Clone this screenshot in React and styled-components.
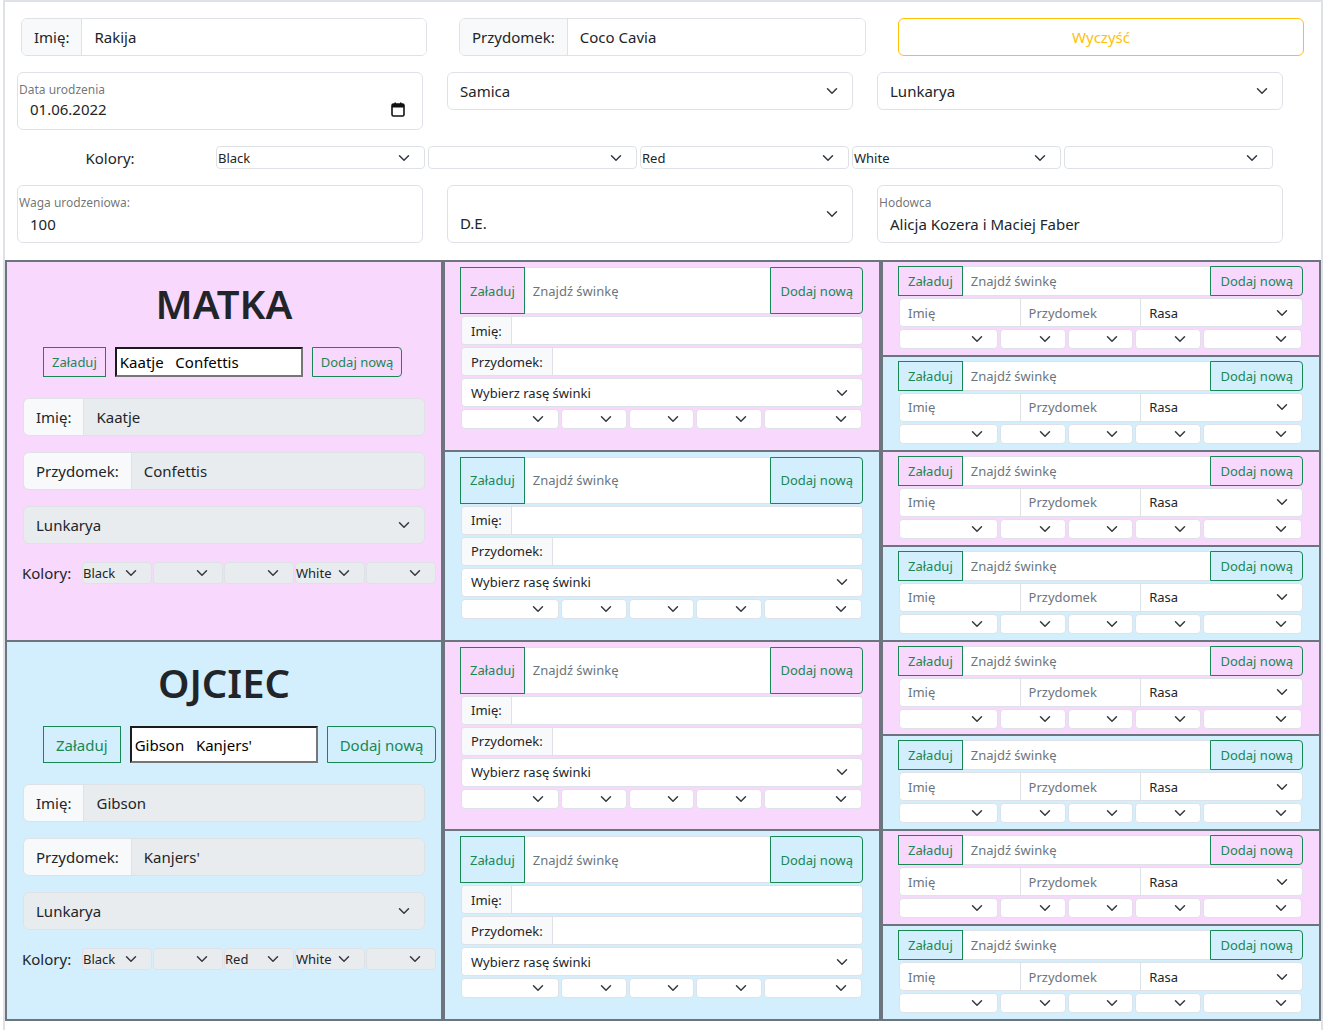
import React from 'react';
import styled, { createGlobalStyle } from 'styled-components';

const FONT = `"Noto Sans", "Segoe UI", "Liberation Sans", sans-serif`;
const PINK = '#f8d8fd';
const BLUE = '#d3effd';
const GREEN = '#198754';
const LINE = '#dee2e6';
const TEXT = '#212529';
const MUTED = '#6c757d';

// Noto Sans runs wider than the original UI font, so sizes are scaled down a touch
const FS = 15;
const FS_SM = 13;

const GlobalStyle = createGlobalStyle`
  * { box-sizing: border-box; }
  body {
    margin: 0;
    font-family: ${FONT};
    color: ${TEXT};
    background: #fff;
  }
`;

const Page = styled.div`
  width: 1320px;
  margin-left: 3px;
  border: 2px solid ${LINE};
  border-bottom: none;
  padding-bottom: 20px;
`;

/* ---------- shared bits ---------- */

const ChevronSvg = styled.svg`
  flex-shrink: 0;
  margin-right: 12px;
`;

const Chevron = () => (
  <ChevronSvg viewBox="0 0 16 16" width="16" height="12">
    <path
      fill="none"
      stroke="#343a40"
      strokeLinecap="round"
      strokeLinejoin="round"
      strokeWidth="2"
      d="m2 5 6 6 6-6"
    />
  </ChevronSvg>
);

const SelectBox = styled.div`
  display: flex;
  align-items: center;
  flex-shrink: 0;
  height: ${p => p.$h}px;
  width: ${p => (p.$w ? `${p.$w}px` : 'auto')};
  padding-left: ${p => p.$pl ?? 12}px;
  border: 1px solid ${LINE};
  border-radius: ${p => p.$r ?? 6}px;
  background: ${p => (p.$disabled ? '#e9ecef' : '#fff')};
  font-size: ${p => p.$fs ?? FS}px;
  color: ${TEXT};
  min-width: 0;
`;

const SelectText = styled.span`
  flex: 1;
  white-space: nowrap;
  overflow: hidden;
  padding-top: ${p => p.$drop ?? 0}px;
`;

const Select = ({ children, ...rest }) => (
  <SelectBox {...rest}>
    <SelectText $drop={rest.$drop}>{children}</SelectText>
    <Chevron />
  </SelectBox>
);

const Group = styled.div`
  display: flex;
  align-items: stretch;
  height: ${p => p.$h}px;
  width: ${p => (p.$w ? `${p.$w}px` : 'auto')};
  border: 1px solid ${LINE};
  border-radius: ${p => p.$r ?? 6}px;
  overflow: hidden;
  font-size: ${p => p.$fs ?? FS}px;
  margin: ${p => p.$m ?? '0'};
`;

const Addon = styled.span`
  display: flex;
  align-items: center;
  padding: 0 ${p => p.$px ?? 12}px;
  background: #f8f9fa;
  border-right: 1px solid ${LINE};
  white-space: nowrap;
`;

const Field = styled.span`
  flex: 1;
  display: flex;
  align-items: center;
  padding: 0 ${p => p.$px ?? 12}px;
  background: ${p => (p.$disabled ? '#e9ecef' : '#fff')};
  color: ${TEXT};
  white-space: nowrap;
`;

/* ---------- top form ---------- */

const TopForm = styled.div`
  display: flex;
  flex-direction: column;
  gap: 16px;
  padding: 16px 0 17px;
`;

const TopRow = styled.div`
  display: flex;
  align-items: ${p => p.$align ?? 'center'};
  padding-left: ${p => p.$pad}px;
  gap: ${p => p.$gap}px;
`;

const ClearButton = styled.button`
  width: 406px;
  height: 38px;
  border: 1px solid #ffc107;
  border-radius: 6px;
  background: #fff;
  color: #ffc107;
  font-family: ${FONT};
  font-size: ${FS}px;
`;

const Floating = styled.div`
  width: 406px;
  height: 58px;
  border: 1px solid ${LINE};
  border-radius: 6px;
  padding-top: 9px;
  display: flex;
  flex-direction: column;
`;

const FloatLabel = styled.span`
  font-size: 12px;
  line-height: 16px;
  padding-left: 1px;
  color: rgba(33, 37, 41, 0.65);
`;

const FloatValue = styled.span`
  display: flex;
  align-items: center;
  justify-content: space-between;
  font-size: ${FS}px;
  line-height: 22px;
  margin-top: ${p => p.$mt ?? 0}px;
  padding: 0 17px 0 12px;
`;

const CalendarSvg = styled.svg`
  flex-shrink: 0;
`;

const ColorsLabel = styled.span`
  width: 186px;
  text-align: center;
  font-size: ${FS}px;
  margin-right: 13px;
`;

const TopColors = styled.div`
  display: flex;
  gap: 3px;
`;

/* ---------- pedigree tree ---------- */

const Tree = styled.div`
  display: grid;
  grid-template-columns: 438px 438px 440px;
  height: 761px;
`;

const Column = styled.div`
  display: flex;
  flex-direction: column;
`;

const Panel = styled.div`
  flex: 1;
  min-height: 0;
  background: ${p => (p.$tone === 'pink' ? PINK : BLUE)};
  border: 2px solid ${MUTED};
  padding: ${p => p.$pad};
  & + & {
    border-top: none;
  }
`;

const Title = styled.h1`
  margin: 0;
  font-size: 40px;
  line-height: 48px;
  font-weight: 600;
  text-align: center;
  color: ${TEXT};
`;

const LoadRow = styled.div`
  display: flex;
  gap: 9px;
  height: ${p => p.$h}px;
  margin: 19px 0 21px 20px;
  font-size: ${p => p.$fs}px;
`;

const OutlineBtn = styled.button`
  display: flex;
  align-items: center;
  justify-content: center;
  flex-shrink: 0;
  padding: 0 ${p => p.$px ?? 8}px;
  border: 1px solid ${GREEN};
  border-radius: ${p => p.$r ?? '0'};
  background: transparent;
  color: ${GREEN};
  font-family: ${FONT};
  font-size: inherit;
  white-space: nowrap;
`;

const NameInput = styled.span`
  display: flex;
  align-items: center;
  flex-shrink: 0;
  width: 188px;
  padding-left: 3px;
  border: 2px solid;
  border-color: #1b1b1b #767676 #767676 #1b1b1b;
  background: #fff;
  color: #000;
  font-size: ${FS}px;
  white-space: pre;
`;

const ParentStack = styled.div`
  display: flex;
  flex-direction: column;
  gap: 16px;
`;

const ParentColors = styled.div`
  display: flex;
  align-items: center;
  margin: 18px 0 0 -1px;
  width: 414px;
`;

const ParentColorsLabel = styled.span`
  font-size: ${FS}px;
  width: 60px;
  flex-shrink: 0;
`;

const ParentColorSelects = styled.div`
  display: flex;
  gap: 1px;
`;

const SearchGroup = styled.div`
  display: flex;
  height: ${p => p.$h}px;
  font-size: ${FS_SM}px;
`;

const SearchInput = styled.span`
  flex: 1;
  display: flex;
  align-items: center;
  padding: 0 8px;
  background: #fff;
  border-top: 1px solid ${LINE};
  border-bottom: 1px solid ${LINE};
  color: ${MUTED};
  white-space: nowrap;
`;

const ColorGrid = styled.div`
  display: grid;
  grid-template-columns: 3fr 2fr 2fr 2fr 3fr;
  gap: 2px;
  margin-top: 2px;
  padding: 0 1px;
`;

const RowGrid = styled.div`
  display: grid;
  grid-template-columns: 3fr 3fr 4fr;
  height: 29px;
  margin: 2px 0 0 1px;
  border: 1px solid ${LINE};
  border-radius: 4px;
  overflow: hidden;
  background: #fff;
  font-size: ${FS_SM}px;
`;

const RowCell = styled.span`
  display: flex;
  align-items: center;
  padding-left: 8px;
  color: ${MUTED};
  border-right: 1px solid ${LINE};
`;

const RowSelect = styled.span`
  display: flex;
  align-items: center;
  padding-left: 8px;
  color: ${TEXT};
`;

const SelectWrap = styled.div`
  margin: 2px 0 0 1px;
`;

/* ---------- components ---------- */

const ColorSelects = () => (
  <ColorGrid>
    {[0, 1, 2, 3, 4].map(i => (
      <Select key={i} $h={20} $r={4} $fs={FS_SM} $pl={2} />
    ))}
  </ColorGrid>
);

const Search = ({ h }) => (
  <SearchGroup $h={h}>
    <OutlineBtn $px={9}>Załaduj</OutlineBtn>
    <SearchInput>Znajdź świnkę</SearchInput>
    <OutlineBtn $px={9} $r="0 4px 4px 0">Dodaj nową</OutlineBtn>
  </SearchGroup>
);

const GrandParent = ({ tone }) => (
  <Panel $tone={tone} $pad="5px 16px 0 15px">
    <Search h={47} />
    <Group $h={29} $r={4} $fs={FS_SM} $m="2px 0 0 1px">
      <Addon $px={9}>Imię:</Addon>
      <Field />
    </Group>
    <Group $h={29} $r={4} $fs={FS_SM} $m="2px 0 0 1px">
      <Addon $px={9}>Przydomek:</Addon>
      <Field />
    </Group>
    <SelectWrap>
      <Select $h={29} $r={4} $fs={FS_SM} $pl={9}>Wybierz rasę świnki</Select>
    </SelectWrap>
    <ColorSelects />
  </Panel>
);

const GreatGrandParent = ({ tone }) => (
  <Panel $tone={tone} $pad="4px 16px 0 15px">
    <Search h={30} />
    <RowGrid>
      <RowCell>Imię</RowCell>
      <RowCell>Przydomek</RowCell>
      <RowSelect>
        <SelectText>Rasa</SelectText>
        <Chevron />
      </RowSelect>
    </RowGrid>
    <ColorSelects />
  </Panel>
);

const Parent = ({ tone, title, name, surname, colors, big }) => (
  <Panel $tone={tone} $pad={big ? '17px 16px 0 16px' : '18px 16px 0 16px'}>
    <Title>{title}</Title>
    <LoadRow $h={big ? 37 : 30} $fs={big ? FS : FS_SM}>
      <OutlineBtn $px={big ? 12 : 8}>Załaduj</OutlineBtn>
      <NameInput>{`${name}   ${surname}`}</NameInput>
      <OutlineBtn $px={big ? 12 : 8} $r="0 4px 4px 0">Dodaj nową</OutlineBtn>
    </LoadRow>
    <ParentStack>
      <Group $h={38}>
        <Addon>Imię:</Addon>
        <Field $disabled>{name}</Field>
      </Group>
      <Group $h={38}>
        <Addon>Przydomek:</Addon>
        <Field $disabled>{surname}</Field>
      </Group>
      <Select $h={38} $disabled>Lunkarya</Select>
    </ParentStack>
    <ParentColors>
      <ParentColorsLabel>Kolory:</ParentColorsLabel>
      <ParentColorSelects>
        {colors.map((c, i) => (
          <Select key={i} $w={70} $h={22} $r={4} $fs={FS_SM} $pl={0} $disabled>
            {c}
          </Select>
        ))}
      </ParentColorSelects>
    </ParentColors>
  </Panel>
);

const Calendar = () => (
  <CalendarSvg width="14" height="15" viewBox="0 0 14 15">
    <rect x="1" y="2" width="12" height="12" rx="1.5" fill="none" stroke="#111" strokeWidth="1.6" />
    <rect x="1" y="2" width="12" height="3.5" fill="#111" />
    <rect x="3.5" y="0.5" width="1.5" height="2.5" fill="#111" />
    <rect x="9" y="0.5" width="1.5" height="2.5" fill="#111" />
  </CalendarSvg>
);

export default function App() {
  const tones = ['pink', 'blue', 'pink', 'blue', 'pink', 'blue', 'pink', 'blue'];
  return (
    <Page>
      <GlobalStyle />
      <TopForm>
        <TopRow $pad={16} $gap={32}>
          <Group $h={38} $w={406}>
            <Addon>Imię:</Addon>
            <Field>Rakija</Field>
          </Group>
          <Group $h={38} $w={407}>
            <Addon>Przydomek:</Addon>
            <Field>Coco Cavia</Field>
          </Group>
          <ClearButton>Wyczyść</ClearButton>
        </TopRow>
        <TopRow $pad={12} $gap={24} $align="flex-start">
          <Floating>
            <FloatLabel>Data urodzenia</FloatLabel>
            <FloatValue>
              01.06.2022
              <Calendar />
            </FloatValue>
          </Floating>
          <Select $w={406} $h={38}>Samica</Select>
          <Select $w={406} $h={38}>Lunkarya</Select>
        </TopRow>
        <TopRow $pad={12} $gap={0}>
          <ColorsLabel>Kolory:</ColorsLabel>
          <TopColors>
            {['Black', '', 'Red', 'White', ''].map((c, i) => (
              <Select key={i} $w={209} $h={23} $r={4} $fs={FS_SM} $pl={1}>
                {c}
              </Select>
            ))}
          </TopColors>
        </TopRow>
        <TopRow $pad={12} $gap={24}>
          <Floating>
            <FloatLabel>Waga urodzeniowa:</FloatLabel>
            <FloatValue $mt={2}>100</FloatValue>
          </Floating>
          <Select $w={406} $h={58} $drop={18}>D.E.</Select>
          <Floating>
            <FloatLabel>Hodowca</FloatLabel>
            <FloatValue $mt={2}>Alicja Kozera i Maciej Faber</FloatValue>
          </Floating>
        </TopRow>
      </TopForm>
      <Tree>
        <Column>
          <Parent
            tone="pink"
            title="MATKA"
            name="Kaatje"
            surname="Confettis"
            colors={['Black', '', '', 'White', '']}
          />
          <Parent
            tone="blue"
            title="OJCIEC"
            name="Gibson"
            surname="Kanjers'"
            colors={['Black', '', 'Red', 'White', '']}
            big
          />
        </Column>
        <Column>
          {tones.slice(0, 4).map((t, i) => (
            <GrandParent key={i} tone={t} />
          ))}
        </Column>
        <Column>
          {tones.map((t, i) => (
            <GreatGrandParent key={i} tone={t} />
          ))}
        </Column>
      </Tree>
    </Page>
  );
}
